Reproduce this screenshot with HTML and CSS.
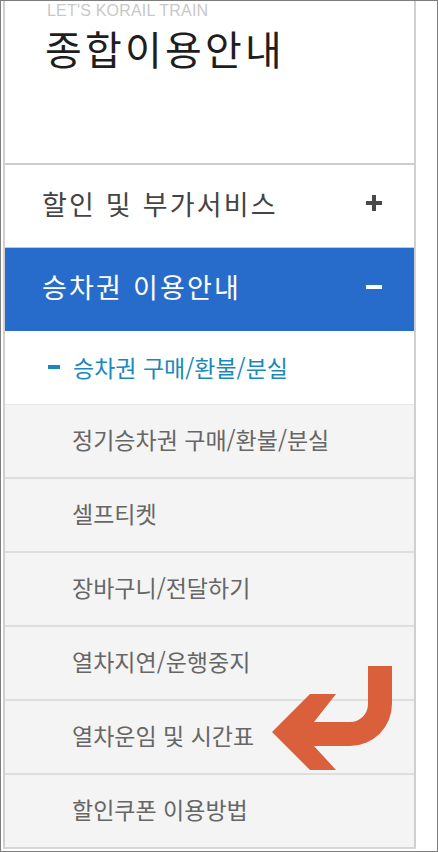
FILE: index.html
```html
<!DOCTYPE html>
<html lang="ko">
<head>
  <meta charset="UTF-8">
  <title>종합이용안내</title>
  <meta name="viewport" content="width=device-width, initial-scale=1.0">
  <link rel="stylesheet" href="styles.css">
</head>
<body>
  <div class="frame">
    <!-- left side menu -->
    <nav class="side">
      <div class="side-head">
        <p class="side-eng">LET'S KORAIL TRAIN</p>
        <h1 class="side-title">종합이용안내</h1>
      </div>

      <ul class="menu">
        <li class="menu-item">
          <span>할인 및 부가서비스</span>
          <svg class="toggle" width="16" height="16" viewBox="0 0 16 16"><path d="M0 8H16M8 0V16"/></svg>
        </li>
        <li class="menu-item on">
          <span>승차권 이용안내</span>
          <svg class="toggle" width="16" height="16" viewBox="0 0 16 16"><path d="M0 8H16"/></svg>
        </li>
      </ul>

      <div class="sub-current"><span class="dash"></span>승차권 구매/환불/분실</div>

      <ul class="sub">
        <li>정기승차권 구매/환불/분실</li>
        <li>셀프티켓</li>
        <li>장바구니/전달하기</li>
        <li>열차지연/운행중지</li>
        <li>열차운임 및 시간표</li>
        <li>할인쿠폰 이용방법</li>
      </ul>
    </nav>

    <!-- pointer arrow on top of the list -->
    <svg class="pointer" width="130" height="110" viewBox="270 664 130 110">
      <path d="M272 732 L310 694 L336 694 L314 722 L350 722 A18 18 0 0 0 368 704 L368 666 L392 666 L392 704 A42 42 0 0 1 350 746 L314 746 L336 770 L310 770 Z"/>
    </svg>
  </div>
</body>
</html>
```

FILE: styles.css
```css
html, body {
  margin: 0;
  background: #fff;
}
.frame {
  position: relative;
  width: 438px;
  height: 852px;
  box-sizing: border-box;
  border: 1px solid #7d7d7d;
  padding-left: 2px;
  overflow: hidden;
  font-family: "Noto Sans CJK KR", "Noto Sans", sans-serif;
}
.side {
  width: 413px;
  box-sizing: border-box;
  border-left: 2px solid #d0d0d0;
  border-right: 2px solid #d0d0d0;
  border-bottom: 2px solid #d6d6d6;
}
.side-head {
  height: 161px;
  padding: 1px 0 0 42px;
  border-bottom: 2px solid #cdcdcd;
}
.side-eng {
  margin: 0;
  font-family: "Liberation Sans", Arial, sans-serif;
  font-size: 16px;
  line-height: 17px;
  letter-spacing: 0.2px;
  color: #c8c8c8;
}
.side-title {
  margin: 0 0 0 -2px;
  font-size: 40px;
  font-weight: 400;
  line-height: normal;
  letter-spacing: 3.2px;
  color: #1e1e1e;
}
.menu, .sub {
  list-style: none;
  margin: 0;
  padding: 0;
}
.menu-item {
  display: flex;
  align-items: center;
  justify-content: space-between;
  height: 82px;
  padding: 0 32px 6px 37px;
  box-sizing: border-box;
  font-size: 27px;
  letter-spacing: 2.2px;
  color: #444;
}
.menu-item.on {
  height: 84px;
  border-top: 1px solid #b8cbe6;
  background: #286ccb;
  color: #fff;
}
.toggle {
  fill: none;
  stroke: #4a4a4a;
  stroke-width: 4;
}
.menu-item.on .toggle {
  stroke: #fff;
}
.sub-current {
  display: flex;
  align-items: center;
  height: 73px;
  padding: 0 0 2px 43px;
  box-sizing: border-box;
  font-size: 23px;
  color: #1b88bb;
}
.dash {
  width: 12px;
  height: 4px;
  margin-right: 13px;
  background: #1b88bb;
}
.sub {
  border-top: 1px solid #e8e8e8;
  box-shadow: inset 0 3px 3px rgba(0,0,0,0.03);
}
.sub li {
  display: flex;
  align-items: center;
  height: 72px;
  padding: 0 0 4px 67px;
  box-sizing: border-box;
  background: #f4f4f4;
  font-size: 23px;
  color: #666;
}
.sub li + li {
  border-top: 2px solid #dedede;
  height: 74px;
}
.pointer {
  position: absolute;
  left: 269px;
  top: 663px;
  fill: #d9603b;
}
```
